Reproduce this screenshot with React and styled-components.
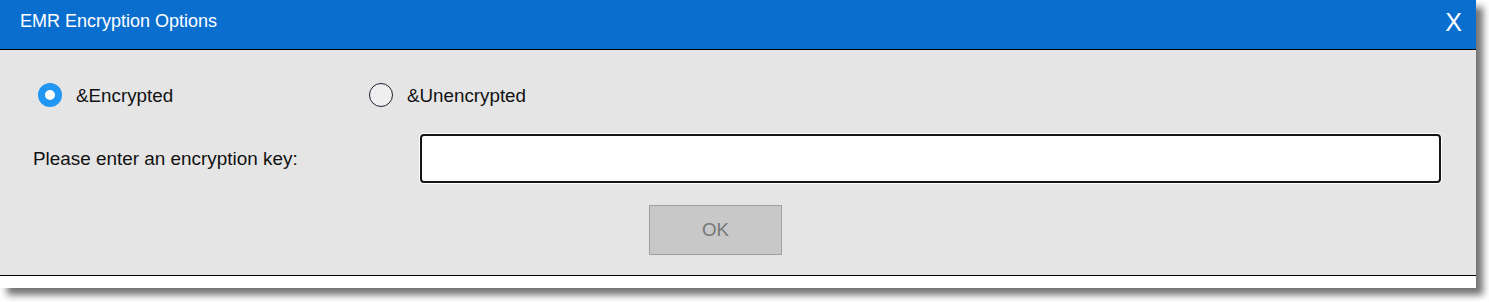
import React, { useState } from 'react';
import styled, { createGlobalStyle } from 'styled-components';

const GlobalStyle = createGlobalStyle`
  html, body {
    margin: 0;
    padding: 0;
    background: #fff;
    font-family: "Liberation Sans", Arial, sans-serif;
    overflow: hidden;
  }
  body {
    min-height: 302px;
  }
`;

const Dialog = styled.div`
  width: 1476px;
  background: #fff;
  box-shadow: 7px 7px 7px rgba(0, 0, 0, 0.55);
  display: flex;
  flex-direction: column;
`;

const Header = styled.div`
  height: 49px;
  background: #0a6ecf;
  border-bottom: 1px solid #000;
  display: flex;
  align-items: center;
  justify-content: space-between;
  padding: 0 14px 0 20px;
  color: #fff;
`;

const Title = styled.div`
  font-size: 18px;
  margin-top: -6px;
`;

const Close = styled.button`
  background: none;
  border: none;
  padding: 0;
  color: #fff;
  font-family: "Liberation Sans", Arial, sans-serif;
  font-size: 25px;
  line-height: 1;
  margin-top: -5px;
  cursor: pointer;
`;

const Body = styled.div`
  background: #e5e5e5;
  border-bottom: 1px solid #000;
  padding: 33px 35px 20px 33px;
  display: flex;
  flex-direction: column;
`;

const RadioRow = styled.div`
  display: flex;
  padding-left: 5px;
  height: 24px;
`;

const Option = styled.label`
  width: 331px;
  display: flex;
  align-items: center;
  gap: 14px;
  font-size: 18.8px;
  color: #111;
  cursor: pointer;
  padding-top: 1px;
`;

const Dot = styled.span`
  box-sizing: border-box;
  width: 24px;
  height: 24px;
  border-radius: 50%;
  flex: none;
  margin-top: -1px;
  background: ${p => (p.checked ? '#fff' : '#efefef')};
  border: ${p => (p.checked ? '7px solid #2196f3' : '1.5px solid #1c1f2e')};
`;

const KeyRow = styled.div`
  display: flex;
  align-items: center;
  margin-top: 27px;
`;

const Label = styled.div`
  width: 387px;
  font-size: 18.9px;
  color: #111;
`;

const KeyInput = styled.input`
  box-sizing: border-box;
  flex: 1;
  height: 49px;
  border: 2px solid #151515;
  border-radius: 4px;
  background: #fff;
  box-shadow: 0 0 0 1px #fff;
  outline: none;
  font-size: 18px;
  font-family: "Liberation Sans", Arial, sans-serif;
  padding: 0 10px;
`;

const ButtonRow = styled.div`
  display: flex;
  margin-top: 22px;
  padding-left: 616px;
`;

const OkButton = styled.button`
  width: 133px;
  height: 50px;
  background: #c8c8c8;
  border: 1px solid #a0a0a0;
  color: #777;
  font-size: 18.67px;
  font-family: "Liberation Sans", Arial, sans-serif;
`;

const Footer = styled.div`
  height: 12px;
  background: #fff;
`;

export default function App() {
  const [mode, setMode] = useState('enc');
  return (
    <>
      <GlobalStyle />
      <Dialog>
        <Header>
          <Title>EMR Encryption Options</Title>
          <Close>X</Close>
        </Header>
        <Body>
          <RadioRow>
            <Option onClick={() => setMode('enc')}>
              <Dot checked={mode === 'enc'} />
              &amp;Encrypted
            </Option>
            <Option onClick={() => setMode('unenc')}>
              <Dot checked={mode === 'unenc'} />
              &amp;Unencrypted
            </Option>
          </RadioRow>
          <KeyRow>
            <Label>Please enter an encryption key:</Label>
            <KeyInput type="text" />
          </KeyRow>
          <ButtonRow>
            <OkButton disabled>OK</OkButton>
          </ButtonRow>
        </Body>
        <Footer />
      </Dialog>
    </>
  );
}
